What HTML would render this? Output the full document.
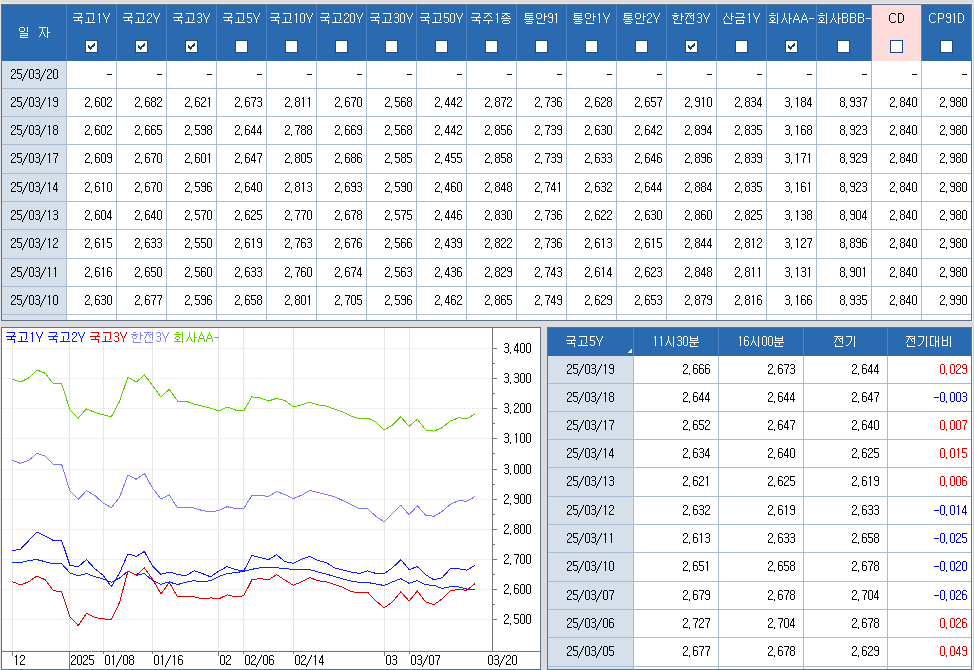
<!DOCTYPE html>
<html><head><meta charset="utf-8"><style>
html,body{margin:0;padding:0;width:974px;height:670px;overflow:hidden;background:#dcdcdf}
body>div,body>svg{position:absolute}
body{font-family:"Liberation Sans",sans-serif}
.t{font-family:"Liberation Sans",sans-serif;line-height:30px;white-space:nowrap}
</style></head><body>
<div style="left:0px;top:0px;width:974px;height:670px;background:#dcdcdf;"></div>
<div style="left:0px;top:3px;width:974px;height:1px;background:#ebebec;"></div>
<div style="left:0px;top:0px;width:1px;height:670px;background:#e6e6e8;"></div>
<div style="left:1px;top:4px;width:971px;height:317px;background:#5d7086;"></div>
<div style="left:2px;top:5px;width:969px;height:315px;background:#ffffff;"></div>
<div style="left:2px;top:5px;width:969px;height:56px;background:#2a6ab0;"></div>
<div style="left:872px;top:5px;width:49px;height:56px;background:#ffdcdc;"></div>
<div style="left:2px;top:61px;width:64px;height:259px;background:#d5e0eb;"></div>
<div style="left:66px;top:5px;width:1px;height:56px;background:#4f84c1;"></div>
<div style="left:66px;top:61px;width:1px;height:259px;background:#a9bccf;"></div>
<div style="left:116px;top:5px;width:1px;height:56px;background:#4f84c1;"></div>
<div style="left:116px;top:61px;width:1px;height:259px;background:#a9bccf;"></div>
<div style="left:166px;top:5px;width:1px;height:56px;background:#4f84c1;"></div>
<div style="left:166px;top:61px;width:1px;height:259px;background:#a9bccf;"></div>
<div style="left:216px;top:5px;width:1px;height:56px;background:#4f84c1;"></div>
<div style="left:216px;top:61px;width:1px;height:259px;background:#a9bccf;"></div>
<div style="left:266px;top:5px;width:1px;height:56px;background:#4f84c1;"></div>
<div style="left:266px;top:61px;width:1px;height:259px;background:#a9bccf;"></div>
<div style="left:316px;top:5px;width:1px;height:56px;background:#4f84c1;"></div>
<div style="left:316px;top:61px;width:1px;height:259px;background:#a9bccf;"></div>
<div style="left:366px;top:5px;width:1px;height:56px;background:#4f84c1;"></div>
<div style="left:366px;top:61px;width:1px;height:259px;background:#a9bccf;"></div>
<div style="left:416px;top:5px;width:1px;height:56px;background:#4f84c1;"></div>
<div style="left:416px;top:61px;width:1px;height:259px;background:#a9bccf;"></div>
<div style="left:466px;top:5px;width:1px;height:56px;background:#4f84c1;"></div>
<div style="left:466px;top:61px;width:1px;height:259px;background:#a9bccf;"></div>
<div style="left:516px;top:5px;width:1px;height:56px;background:#4f84c1;"></div>
<div style="left:516px;top:61px;width:1px;height:259px;background:#a9bccf;"></div>
<div style="left:566px;top:5px;width:1px;height:56px;background:#4f84c1;"></div>
<div style="left:566px;top:61px;width:1px;height:259px;background:#a9bccf;"></div>
<div style="left:616px;top:5px;width:1px;height:56px;background:#4f84c1;"></div>
<div style="left:616px;top:61px;width:1px;height:259px;background:#a9bccf;"></div>
<div style="left:666px;top:5px;width:1px;height:56px;background:#4f84c1;"></div>
<div style="left:666px;top:61px;width:1px;height:259px;background:#a9bccf;"></div>
<div style="left:716px;top:5px;width:1px;height:56px;background:#4f84c1;"></div>
<div style="left:716px;top:61px;width:1px;height:259px;background:#a9bccf;"></div>
<div style="left:766px;top:5px;width:1px;height:56px;background:#4f84c1;"></div>
<div style="left:766px;top:61px;width:1px;height:259px;background:#a9bccf;"></div>
<div style="left:816px;top:5px;width:1px;height:56px;background:#4f84c1;"></div>
<div style="left:816px;top:61px;width:1px;height:259px;background:#a9bccf;"></div>
<div style="left:871px;top:5px;width:1px;height:56px;background:#4f84c1;"></div>
<div style="left:871px;top:61px;width:1px;height:259px;background:#a9bccf;"></div>
<div style="left:921px;top:5px;width:1px;height:56px;background:#4f84c1;"></div>
<div style="left:921px;top:61px;width:1px;height:259px;background:#a9bccf;"></div>
<div style="left:2px;top:88px;width:969px;height:1px;background:#a9bccf;"></div>
<div style="left:2px;top:116px;width:969px;height:1px;background:#a9bccf;"></div>
<div style="left:2px;top:144px;width:969px;height:1px;background:#a9bccf;"></div>
<div style="left:2px;top:173px;width:969px;height:1px;background:#a9bccf;"></div>
<div style="left:2px;top:201px;width:969px;height:1px;background:#a9bccf;"></div>
<div style="left:2px;top:229px;width:969px;height:1px;background:#a9bccf;"></div>
<div style="left:2px;top:258px;width:969px;height:1px;background:#a9bccf;"></div>
<div style="left:2px;top:286px;width:969px;height:1px;background:#a9bccf;"></div>
<div style="left:2px;top:314px;width:969px;height:1px;background:#a9bccf;"></div>
<div style="left:85px;top:40px;width:11px;height:11px;border:1px solid #1a4a7e;background:#fff"></div>
<svg style="position:absolute;left:88px;top:43px" width="7" height="7" shape-rendering="crispEdges"><path d="M6 0h1v1h-1zM5 1h2v1h-2zM0 2h1v1h-1zM4 2h3v1h-3zM0 3h2v1h-2zM3 3h3v1h-3zM0 4h4v1h-4zM1 5h3v1h-3zM2 6h1v1h-1z" fill="#0f4072"/></svg>
<div style="left:135px;top:40px;width:11px;height:11px;border:1px solid #1a4a7e;background:#fff"></div>
<svg style="position:absolute;left:138px;top:43px" width="7" height="7" shape-rendering="crispEdges"><path d="M6 0h1v1h-1zM5 1h2v1h-2zM0 2h1v1h-1zM4 2h3v1h-3zM0 3h2v1h-2zM3 3h3v1h-3zM0 4h4v1h-4zM1 5h3v1h-3zM2 6h1v1h-1z" fill="#0f4072"/></svg>
<div style="left:185px;top:40px;width:11px;height:11px;border:1px solid #1a4a7e;background:#fff"></div>
<svg style="position:absolute;left:188px;top:43px" width="7" height="7" shape-rendering="crispEdges"><path d="M6 0h1v1h-1zM5 1h2v1h-2zM0 2h1v1h-1zM4 2h3v1h-3zM0 3h2v1h-2zM3 3h3v1h-3zM0 4h4v1h-4zM1 5h3v1h-3zM2 6h1v1h-1z" fill="#0f4072"/></svg>
<div style="left:235px;top:40px;width:11px;height:11px;border:1px solid #1a4a7e;background:#fff"></div>
<div style="left:285px;top:40px;width:11px;height:11px;border:1px solid #1a4a7e;background:#fff"></div>
<div style="left:335px;top:40px;width:11px;height:11px;border:1px solid #1a4a7e;background:#fff"></div>
<div style="left:385px;top:40px;width:11px;height:11px;border:1px solid #1a4a7e;background:#fff"></div>
<div style="left:435px;top:40px;width:11px;height:11px;border:1px solid #1a4a7e;background:#fff"></div>
<div style="left:485px;top:40px;width:11px;height:11px;border:1px solid #1a4a7e;background:#fff"></div>
<div style="left:535px;top:40px;width:11px;height:11px;border:1px solid #1a4a7e;background:#fff"></div>
<div style="left:585px;top:40px;width:11px;height:11px;border:1px solid #1a4a7e;background:#fff"></div>
<div style="left:635px;top:40px;width:11px;height:11px;border:1px solid #1a4a7e;background:#fff"></div>
<div style="left:685px;top:40px;width:11px;height:11px;border:1px solid #1a4a7e;background:#fff"></div>
<svg style="position:absolute;left:688px;top:43px" width="7" height="7" shape-rendering="crispEdges"><path d="M6 0h1v1h-1zM5 1h2v1h-2zM0 2h1v1h-1zM4 2h3v1h-3zM0 3h2v1h-2zM3 3h3v1h-3zM0 4h4v1h-4zM1 5h3v1h-3zM2 6h1v1h-1z" fill="#0f4072"/></svg>
<div style="left:735px;top:40px;width:11px;height:11px;border:1px solid #1a4a7e;background:#fff"></div>
<div style="left:785px;top:40px;width:11px;height:11px;border:1px solid #1a4a7e;background:#fff"></div>
<svg style="position:absolute;left:788px;top:43px" width="7" height="7" shape-rendering="crispEdges"><path d="M6 0h1v1h-1zM5 1h2v1h-2zM0 2h1v1h-1zM4 2h3v1h-3zM0 3h2v1h-2zM3 3h3v1h-3zM0 4h4v1h-4zM1 5h3v1h-3zM2 6h1v1h-1z" fill="#0f4072"/></svg>
<div style="left:837px;top:40px;width:11px;height:11px;border:1px solid #1a4a7e;background:#fff"></div>
<div style="left:890px;top:40px;width:11px;height:11px;border:1px solid #1a4a7e;background:#fff"></div>
<div style="left:940px;top:40px;width:11px;height:11px;border:1px solid #1a4a7e;background:#fff"></div>
<div style="left:972px;top:5px;width:1px;height:316px;background:#ffffff;"></div>
<div style="left:973px;top:5px;width:1px;height:316px;background:#c9d3de;"></div>
<div style="left:1px;top:327px;width:540px;height:343px;background:#5d7086;"></div>
<div style="left:2px;top:328px;width:538px;height:341px;background:#ffffff;"></div>
<svg style="position:absolute;left:0;top:0" width="974" height="670" viewBox="0 0 974 670"><rect x="12" y="328" width="1" height="323" fill="#e6e6e6"/><rect x="69" y="328" width="1" height="323" fill="#e6e6e6"/><rect x="103" y="328" width="1" height="323" fill="#e6e6e6"/><rect x="152" y="328" width="1" height="323" fill="#e6e6e6"/><rect x="218" y="328" width="1" height="323" fill="#e6e6e6"/><rect x="243" y="328" width="1" height="323" fill="#e6e6e6"/><rect x="293" y="328" width="1" height="323" fill="#e6e6e6"/><rect x="384" y="328" width="1" height="323" fill="#e6e6e6"/><rect x="409" y="328" width="1" height="323" fill="#e6e6e6"/><line x1="2" y1="619.5" x2="493" y2="619.5" stroke="#e2e2e2" stroke-width="1" stroke-dasharray="1 1"/><line x1="2" y1="589.5" x2="493" y2="589.5" stroke="#e2e2e2" stroke-width="1" stroke-dasharray="1 1"/><line x1="2" y1="559.5" x2="493" y2="559.5" stroke="#e2e2e2" stroke-width="1" stroke-dasharray="1 1"/><line x1="2" y1="529.5" x2="493" y2="529.5" stroke="#e2e2e2" stroke-width="1" stroke-dasharray="1 1"/><line x1="2" y1="499.5" x2="493" y2="499.5" stroke="#e2e2e2" stroke-width="1" stroke-dasharray="1 1"/><line x1="2" y1="469.5" x2="493" y2="469.5" stroke="#e2e2e2" stroke-width="1" stroke-dasharray="1 1"/><line x1="2" y1="438.5" x2="493" y2="438.5" stroke="#e2e2e2" stroke-width="1" stroke-dasharray="1 1"/><line x1="2" y1="408.5" x2="493" y2="408.5" stroke="#e2e2e2" stroke-width="1" stroke-dasharray="1 1"/><line x1="2" y1="378.5" x2="493" y2="378.5" stroke="#e2e2e2" stroke-width="1" stroke-dasharray="1 1"/><line x1="2" y1="348.5" x2="493" y2="348.5" stroke="#e2e2e2" stroke-width="1" stroke-dasharray="1 1"/><rect x="492" y="328" width="1" height="324" fill="#777"/><rect x="493" y="619" width="4" height="1" fill="#777"/><rect x="493" y="589" width="4" height="1" fill="#777"/><rect x="493" y="559" width="4" height="1" fill="#777"/><rect x="493" y="529" width="4" height="1" fill="#777"/><rect x="493" y="499" width="4" height="1" fill="#777"/><rect x="493" y="469" width="4" height="1" fill="#777"/><rect x="493" y="438" width="4" height="1" fill="#777"/><rect x="493" y="408" width="4" height="1" fill="#777"/><rect x="493" y="378" width="4" height="1" fill="#777"/><rect x="493" y="348" width="4" height="1" fill="#777"/><rect x="493" y="604" width="2" height="1" fill="#777"/><rect x="493" y="574" width="2" height="1" fill="#777"/><rect x="493" y="544" width="2" height="1" fill="#777"/><rect x="493" y="514" width="2" height="1" fill="#777"/><rect x="493" y="484" width="2" height="1" fill="#777"/><rect x="493" y="453" width="2" height="1" fill="#777"/><rect x="493" y="423" width="2" height="1" fill="#777"/><rect x="493" y="393" width="2" height="1" fill="#777"/><rect x="493" y="363" width="2" height="1" fill="#777"/><rect x="2" y="651" width="538" height="1" fill="#777"/><rect x="12" y="652" width="1" height="4" fill="#777"/><rect x="218" y="652" width="1" height="4" fill="#777"/><rect x="384" y="652" width="1" height="4" fill="#777"/><rect x="103" y="652" width="1" height="2" fill="#777"/><rect x="152" y="652" width="1" height="2" fill="#777"/><rect x="243" y="652" width="1" height="2" fill="#777"/><rect x="293" y="652" width="1" height="2" fill="#777"/><rect x="409" y="652" width="1" height="2" fill="#777"/><line x1="2" y1="650.5" x2="492" y2="650.5" stroke="#e8e8e8" stroke-width="1" stroke-dasharray="1 1"/><rect x="69" y="652" width="1" height="17" fill="#777"/><rect x="493" y="651" width="4" height="1" fill="#777"/><polyline points="12.1,562.6 20.4,562.6 28.6,560.5 36.9,559.6 45.2,561.7 53.4,563.8 61.7,563.8 70.0,572.9 78.3,575.9 86.5,573.5 94.8,576.8 103.1,578.9 111.3,582.2 119.6,578.0 127.9,571.1 136.2,575.3 144.4,573.5 152.7,580.7 161.0,584.3 169.2,581.9 177.5,584.6 185.8,582.2 194.0,580.7 202.3,581.9 210.6,580.7 218.8,576.5 227.1,573.5 235.4,572.6 243.7,571.4 251.9,569.3 260.2,567.8 268.5,567.8 276.7,567.8 285.0,568.7 293.3,569.3 301.6,569.6 309.8,569.6 318.1,572.0 326.4,574.1 334.6,576.5 342.9,578.9 351.2,581.0 359.4,582.5 367.7,582.5 376.0,584.0 384.2,585.5 392.5,581.9 400.8,578.6 409.1,583.4 417.3,580.7 425.6,584.9 433.9,585.2 442.1,588.5 450.4,586.7 458.7,587.0 466.9,589.1 475.2,589.1" fill="none" stroke="#0a28f0" stroke-width="1" shape-rendering="crispEdges"/><polyline points="12.1,550.6 20.4,549.4 28.6,540.7 36.9,531.9 45.2,536.2 53.4,540.4 61.7,540.7 70.0,565.4 78.3,566.6 86.5,559.6 94.8,568.7 103.1,575.3 111.3,586.7 119.6,572.9 127.9,553.9 136.2,556.3 144.4,551.5 152.7,566.3 161.0,574.4 169.2,572.0 177.5,574.4 185.8,575.9 194.0,570.8 202.3,573.5 210.6,576.8 218.8,571.1 227.1,566.6 235.4,569.6 243.7,571.1 251.9,555.4 260.2,557.5 268.5,559.6 276.7,554.8 285.0,561.7 293.3,563.2 301.6,559.3 309.8,556.3 318.1,560.5 326.4,562.6 334.6,567.8 342.9,569.9 351.2,572.0 359.4,573.5 367.7,570.8 376.0,573.5 384.2,573.5 392.5,567.8 400.8,559.6 409.1,569.6 417.3,566.6 425.6,574.7 433.9,579.8 442.1,577.7 450.4,568.7 458.7,568.7 466.9,570.2 475.2,565.1" fill="none" stroke="#1414ff" stroke-width="1" shape-rendering="crispEdges"/><polyline points="12.1,581.6 20.4,584.9 28.6,581.9 36.9,575.9 45.2,579.8 53.4,590.6 61.7,591.8 70.0,617.1 78.3,625.6 86.5,613.2 94.8,617.4 103.1,618.9 111.3,619.5 119.6,602.4 127.9,571.1 136.2,575.3 144.4,567.8 152.7,579.5 161.0,594.0 169.2,582.5 177.5,596.7 185.8,596.7 194.0,596.7 202.3,598.8 210.6,597.9 218.8,598.8 227.1,594.9 235.4,596.7 243.7,595.8 251.9,579.8 260.2,578.6 268.5,579.8 276.7,574.7 285.0,580.1 293.3,585.2 301.6,581.9 309.8,577.7 318.1,580.7 326.4,581.9 334.6,584.6 342.9,587.3 351.2,591.8 359.4,592.4 367.7,592.4 376.0,600.9 384.2,607.8 392.5,601.8 400.8,591.8 409.1,600.9 417.3,590.9 425.6,601.8 433.9,604.8 442.1,598.8 450.4,590.9 458.7,589.4 466.9,590.3 475.2,583.4" fill="none" stroke="#e00000" stroke-width="1" shape-rendering="crispEdges"/><polyline points="12.1,460.3 20.4,463.3 28.6,460.6 36.9,453.4 45.2,456.1 53.4,464.2 61.7,464.5 70.0,491.3 78.3,499.4 86.5,490.7 94.8,495.5 103.1,503.0 111.3,507.6 119.6,497.3 127.9,475.0 136.2,479.3 144.4,473.5 152.7,488.3 161.0,499.1 169.2,494.9 177.5,507.9 185.8,507.9 194.0,507.9 202.3,510.6 210.6,511.8 218.8,510.6 227.1,506.7 235.4,508.5 243.7,508.5 251.9,495.5 260.2,495.5 268.5,496.4 276.7,491.6 285.0,494.6 293.3,498.5 301.6,495.2 309.8,490.4 318.1,492.5 326.4,494.6 334.6,496.7 342.9,500.6 351.2,504.5 359.4,508.5 367.7,508.5 376.0,516.6 384.2,521.7 392.5,513.6 400.8,505.4 409.1,514.8 417.3,505.7 425.6,515.1 433.9,516.3 442.1,511.5 450.4,504.2 458.7,500.6 466.9,501.2 475.2,496.4" fill="none" stroke="#7b7bff" stroke-width="1" shape-rendering="crispEdges"/><polyline points="12.1,379.0 20.4,382.0 28.6,378.1 36.9,370.0 45.2,373.3 53.4,383.8 61.7,383.8 70.0,410.0 78.3,418.1 86.5,408.8 94.8,412.4 103.1,414.8 111.3,416.9 119.6,401.3 127.9,377.2 136.2,382.0 144.4,375.1 152.7,385.6 161.0,397.1 169.2,389.2 177.5,401.0 185.8,401.0 194.0,404.0 202.3,406.1 210.6,408.2 218.8,410.9 227.1,407.0 235.4,410.0 243.7,410.9 251.9,396.8 260.2,398.0 268.5,401.0 276.7,398.3 285.0,400.7 293.3,407.0 301.6,404.9 309.8,402.2 318.1,404.9 326.4,406.1 334.6,409.4 342.9,411.8 351.2,416.0 359.4,419.0 367.7,418.1 376.0,422.1 384.2,429.9 392.5,425.1 400.8,416.9 409.1,426.3 417.3,419.3 425.6,429.9 433.9,431.1 442.1,427.8 450.4,420.9 458.7,417.8 466.9,418.7 475.2,413.9" fill="none" stroke="#5fcc00" stroke-width="1" shape-rendering="crispEdges"/></svg>
<div style="left:547px;top:327px;width:425px;height:343px;background:#5d7086;"></div>
<div style="left:548px;top:328px;width:423px;height:341px;background:#ffffff;"></div>
<div style="left:548px;top:328px;width:423px;height:28px;background:#2a6ab0;"></div>
<div style="left:548px;top:356px;width:85px;height:313px;background:#d5e0eb;"></div>
<div style="left:633px;top:328px;width:1px;height:28px;background:#4f84c1;"></div>
<div style="left:633px;top:356px;width:1px;height:313px;background:#a9bccf;"></div>
<div style="left:718px;top:328px;width:1px;height:28px;background:#4f84c1;"></div>
<div style="left:718px;top:356px;width:1px;height:313px;background:#a9bccf;"></div>
<div style="left:803px;top:328px;width:1px;height:28px;background:#4f84c1;"></div>
<div style="left:803px;top:356px;width:1px;height:313px;background:#a9bccf;"></div>
<div style="left:887px;top:328px;width:1px;height:28px;background:#4f84c1;"></div>
<div style="left:887px;top:356px;width:1px;height:313px;background:#a9bccf;"></div>
<div style="left:548px;top:383px;width:423px;height:1px;background:#a9bccf;"></div>
<div style="left:548px;top:411px;width:423px;height:1px;background:#a9bccf;"></div>
<div style="left:548px;top:439px;width:423px;height:1px;background:#a9bccf;"></div>
<div style="left:548px;top:467px;width:423px;height:1px;background:#a9bccf;"></div>
<div style="left:548px;top:496px;width:423px;height:1px;background:#a9bccf;"></div>
<div style="left:548px;top:524px;width:423px;height:1px;background:#a9bccf;"></div>
<div style="left:548px;top:552px;width:423px;height:1px;background:#a9bccf;"></div>
<div style="left:548px;top:581px;width:423px;height:1px;background:#a9bccf;"></div>
<div style="left:548px;top:609px;width:423px;height:1px;background:#a9bccf;"></div>
<div style="left:548px;top:637px;width:423px;height:1px;background:#a9bccf;"></div>
<div style="left:548px;top:666px;width:423px;height:1px;background:#a9bccf;"></div>
<svg style="position:absolute;left:628px;top:349px" width="4" height="4" shape-rendering="crispEdges"><path d="M3 0h1v4h-4v-1h1v-1h1v-1h1z" fill="#fff"/></svg>
<div style="left:972px;top:328px;width:1px;height:341px;background:#ffffff;"></div>
<div style="left:973px;top:328px;width:1px;height:341px;background:#c9d3de;"></div>
<svg style="position:absolute;left:0;top:0" width="974" height="670" shape-rendering="crispEdges"><defs><path id="a" d="M1 0h3v1h-3zM0 1h1v1h-1zM4 1h1v1h-1zM0 2h1v1h-1zM4 2h1v1h-1zM0 3h1v1h-1zM4 3h1v1h-1zM0 4h1v1h-1zM4 4h1v1h-1zM0 5h1v1h-1zM4 5h1v1h-1zM0 6h1v1h-1zM4 6h1v1h-1zM0 7h1v1h-1zM4 7h1v1h-1zM0 8h1v1h-1zM4 8h1v1h-1zM1 9h3v1h-3z"/><path id="b" d="M2 0h1v1h-1zM1 1h2v1h-2zM2 2h1v1h-1zM2 3h1v1h-1zM2 4h1v1h-1zM2 5h1v1h-1zM2 6h1v1h-1zM2 7h1v1h-1zM2 8h1v1h-1zM2 9h1v1h-1z"/><path id="c" d="M1 0h3v1h-3zM0 1h1v1h-1zM4 1h1v1h-1zM0 2h1v1h-1zM4 2h1v1h-1zM4 3h1v1h-1zM3 4h1v1h-1zM2 5h1v1h-1zM1 6h1v1h-1zM0 7h1v1h-1zM0 8h1v1h-1zM0 9h5v1h-5z"/><path id="d" d="M1 0h3v1h-3zM0 1h1v1h-1zM4 1h1v1h-1zM4 2h1v1h-1zM4 3h1v1h-1zM1 4h3v1h-3zM4 5h1v1h-1zM4 6h1v1h-1zM4 7h1v1h-1zM0 8h1v1h-1zM4 8h1v1h-1zM1 9h3v1h-3z"/><path id="e" d="M3 0h1v1h-1zM2 1h2v1h-2zM2 2h2v1h-2zM1 3h1v1h-1zM3 3h1v1h-1zM1 4h1v1h-1zM3 4h1v1h-1zM0 5h1v1h-1zM3 5h1v1h-1zM0 6h1v1h-1zM3 6h1v1h-1zM0 7h5v1h-5zM3 8h1v1h-1zM3 9h1v1h-1z"/><path id="f" d="M0 0h5v1h-5zM0 1h1v1h-1zM0 2h1v1h-1zM0 3h1v1h-1zM0 4h4v1h-4zM4 5h1v1h-1zM4 6h1v1h-1zM4 7h1v1h-1zM0 8h1v1h-1zM4 8h1v1h-1zM1 9h3v1h-3z"/><path id="g" d="M1 0h3v1h-3zM0 1h1v1h-1zM4 1h1v1h-1zM0 2h1v1h-1zM0 3h1v1h-1zM0 4h4v1h-4zM0 5h1v1h-1zM4 5h1v1h-1zM0 6h1v1h-1zM4 6h1v1h-1zM0 7h1v1h-1zM4 7h1v1h-1zM0 8h1v1h-1zM4 8h1v1h-1zM1 9h3v1h-3z"/><path id="h" d="M0 0h5v1h-5zM4 1h1v1h-1zM4 2h1v1h-1zM3 3h1v1h-1zM3 4h1v1h-1zM2 5h1v1h-1zM2 6h1v1h-1zM2 7h1v1h-1zM2 8h1v1h-1zM2 9h1v1h-1z"/><path id="i" d="M1 0h3v1h-3zM0 1h1v1h-1zM4 1h1v1h-1zM0 2h1v1h-1zM4 2h1v1h-1zM0 3h1v1h-1zM4 3h1v1h-1zM1 4h3v1h-3zM0 5h1v1h-1zM4 5h1v1h-1zM0 6h1v1h-1zM4 6h1v1h-1zM0 7h1v1h-1zM4 7h1v1h-1zM0 8h1v1h-1zM4 8h1v1h-1zM1 9h3v1h-3z"/><path id="j" d="M1 0h3v1h-3zM0 1h1v1h-1zM4 1h1v1h-1zM0 2h1v1h-1zM4 2h1v1h-1zM0 3h1v1h-1zM4 3h1v1h-1zM1 4h4v1h-4zM4 5h1v1h-1zM4 6h1v1h-1zM4 7h1v1h-1zM0 8h1v1h-1zM4 8h1v1h-1zM1 9h3v1h-3z"/><path id="k" d="M0 9h1v1h-1zM0 10h1v1h-1z"/><path id="l" d="M0 5h5v1h-5z"/><path id="m" d="M4 0h1v1h-1zM4 1h1v1h-1zM3 2h1v1h-1zM3 3h1v1h-1zM2 4h1v1h-1zM2 5h1v1h-1zM1 6h1v1h-1zM1 7h1v1h-1zM0 8h1v1h-1zM0 9h1v1h-1zM-1 10h1v1h-1zM-1 11h1v1h-1z"/><path id="h0" d="M1 0h8v1h-8zM8 1h1v1h-1zM8 2h1v1h-1zM7 3h1v1h-1zM0 4h10v1h-10zM5 5h1v1h-1zM5 6h1v1h-1zM1 7h8v1h-8zM8 8h1v1h-1zM8 9h1v1h-1zM8 10h1v1h-1z"/><path id="h1" d="M1 0h8v1h-8zM8 1h1v1h-1zM8 2h1v1h-1zM8 3h1v1h-1zM3 4h1v1h-1zM8 4h1v1h-1zM3 5h1v1h-1zM8 5h1v1h-1zM3 6h1v1h-1zM8 6h1v1h-1zM3 7h1v1h-1zM7 7h1v1h-1zM3 8h1v1h-1zM0 9h10v1h-10z"/><path id="h2" d="M1 0h8v1h-8zM5 1h1v1h-1zM4 2h1v1h-1zM6 2h1v1h-1zM3 3h1v1h-1zM7 3h1v1h-1zM1 4h2v1h-2zM8 4h1v1h-1zM0 7h10v1h-10zM5 8h1v1h-1zM5 9h1v1h-1zM5 10h1v1h-1z"/><path id="h3" d="M1 0h8v1h-8zM4 1h2v1h-2zM3 2h1v1h-1zM6 2h1v1h-1zM1 3h2v1h-2zM7 3h2v1h-2zM5 4h1v1h-1zM0 5h10v1h-10zM2 7h6v1h-6zM1 8h1v1h-1zM8 8h1v1h-1zM1 9h1v1h-1zM8 9h1v1h-1zM2 10h6v1h-6z"/><path id="h4" d="M1 0h8v1h-8zM1 1h1v1h-1zM1 2h8v1h-8zM1 3h1v1h-1zM1 4h8v1h-8zM5 5h1v1h-1zM0 6h10v1h-10zM2 8h6v1h-6zM1 9h1v1h-1zM8 9h1v1h-1zM2 10h6v1h-6z"/><path id="h5" d="M1 0h4v1h-4zM8 0h1v1h-1zM0 1h1v1h-1zM5 1h1v1h-1zM8 1h1v1h-1zM0 2h1v1h-1zM5 2h1v1h-1zM8 2h1v1h-1zM0 3h1v1h-1zM5 3h1v1h-1zM8 3h3v1h-3zM0 4h1v1h-1zM5 4h1v1h-1zM8 4h1v1h-1zM1 5h4v1h-4zM8 5h1v1h-1zM8 6h1v1h-1zM8 7h1v1h-1zM1 8h1v1h-1zM1 9h1v1h-1zM1 10h8v1h-8z"/><path id="h6" d="M1 0h3v1h-3zM8 0h1v1h-1zM8 1h1v1h-1zM-1 2h7v1h-7zM8 2h1v1h-1zM1 3h3v1h-3zM8 3h3v1h-3zM0 4h1v1h-1zM4 4h1v1h-1zM8 4h1v1h-1zM0 5h1v1h-1zM4 5h1v1h-1zM8 5h1v1h-1zM1 6h3v1h-3zM8 6h1v1h-1zM8 7h1v1h-1zM1 8h1v1h-1zM1 9h1v1h-1zM1 10h8v1h-8z"/><path id="h7" d="M0 0h7v1h-7zM8 0h1v1h-1zM3 1h1v1h-1zM8 1h1v1h-1zM2 2h1v1h-1zM4 2h1v1h-1zM6 2h3v1h-3zM2 3h1v1h-1zM5 3h1v1h-1zM8 3h1v1h-1zM1 4h1v1h-1zM5 4h1v1h-1zM8 4h1v1h-1zM1 5h1v1h-1zM6 5h1v1h-1zM8 5h1v1h-1zM0 6h1v1h-1zM8 6h1v1h-1zM8 7h1v1h-1zM1 8h1v1h-1zM1 9h1v1h-1zM1 10h8v1h-8z"/><path id="h8" d="M3 0h1v1h-1zM8 0h1v1h-1zM3 1h1v1h-1zM8 1h1v1h-1zM3 2h1v1h-1zM8 2h1v1h-1zM2 3h1v1h-1zM4 3h1v1h-1zM8 3h3v1h-3zM1 4h1v1h-1zM5 4h1v1h-1zM8 4h1v1h-1zM1 5h1v1h-1zM6 5h1v1h-1zM8 5h1v1h-1zM0 6h1v1h-1zM8 6h1v1h-1zM8 7h1v1h-1zM1 8h1v1h-1zM1 9h1v1h-1zM1 10h8v1h-8z"/><path id="h9" d="M1 0h8v1h-8zM8 1h1v1h-1zM8 2h1v1h-1zM7 3h1v1h-1zM0 4h10v1h-10zM1 7h8v1h-8zM1 8h1v1h-1zM8 8h1v1h-1zM1 9h1v1h-1zM8 9h1v1h-1zM1 10h8v1h-8z"/><path id="h10" d="M2 0h3v1h-3zM8 0h1v1h-1zM8 1h1v1h-1zM0 2h7v1h-7zM8 2h1v1h-1zM8 3h1v1h-1zM2 4h3v1h-3zM8 4h1v1h-1zM1 5h1v1h-1zM5 5h1v1h-1zM8 5h1v1h-1zM1 6h1v1h-1zM5 6h1v1h-1zM8 6h1v1h-1zM2 7h3v1h-3zM8 7h1v1h-1zM3 8h1v1h-1zM8 8h1v1h-1zM0 9h7v1h-7zM8 9h1v1h-1zM8 10h1v1h-1z"/><path id="h11" d="M3 0h1v1h-1zM8 0h1v1h-1zM3 1h1v1h-1zM8 1h1v1h-1zM3 2h1v1h-1zM8 2h1v1h-1zM3 3h1v1h-1zM8 3h1v1h-1zM3 4h1v1h-1zM8 4h1v1h-1zM2 5h1v1h-1zM4 5h1v1h-1zM8 5h3v1h-3zM2 6h1v1h-1zM4 6h1v1h-1zM8 6h1v1h-1zM1 7h1v1h-1zM5 7h1v1h-1zM8 7h1v1h-1zM1 8h1v1h-1zM5 8h1v1h-1zM8 8h1v1h-1zM0 9h1v1h-1zM6 9h1v1h-1zM8 9h1v1h-1zM8 10h1v1h-1z"/><path id="h12" d="M3 0h1v1h-1zM8 0h1v1h-1zM3 1h1v1h-1zM8 1h1v1h-1zM3 2h1v1h-1zM8 2h1v1h-1zM3 3h1v1h-1zM8 3h1v1h-1zM3 4h1v1h-1zM8 4h1v1h-1zM2 5h1v1h-1zM4 5h1v1h-1zM8 5h1v1h-1zM2 6h1v1h-1zM4 6h1v1h-1zM8 6h1v1h-1zM1 7h1v1h-1zM5 7h1v1h-1zM8 7h1v1h-1zM1 8h1v1h-1zM5 8h1v1h-1zM8 8h1v1h-1zM0 9h1v1h-1zM6 9h1v1h-1zM8 9h1v1h-1zM8 10h1v1h-1z"/><path id="h13" d="M0 0h7v1h-7zM8 0h1v1h-1zM3 1h1v1h-1zM8 1h1v1h-1zM3 2h1v1h-1zM8 2h1v1h-1zM3 3h1v1h-1zM8 3h1v1h-1zM3 4h1v1h-1zM8 4h1v1h-1zM2 5h1v1h-1zM4 5h1v1h-1zM8 5h3v1h-3zM2 6h1v1h-1zM4 6h1v1h-1zM8 6h1v1h-1zM1 7h1v1h-1zM5 7h1v1h-1zM8 7h1v1h-1zM1 8h1v1h-1zM5 8h1v1h-1zM8 8h1v1h-1zM0 9h1v1h-1zM6 9h1v1h-1zM8 9h1v1h-1zM8 10h1v1h-1z"/><path id="h14" d="M1 0h4v1h-4zM8 0h1v1h-1zM0 1h1v1h-1zM5 1h1v1h-1zM8 1h1v1h-1zM0 2h1v1h-1zM5 2h1v1h-1zM8 2h1v1h-1zM0 3h1v1h-1zM5 3h1v1h-1zM8 3h1v1h-1zM1 4h4v1h-4zM8 4h1v1h-1zM1 6h8v1h-8zM8 7h1v1h-1zM1 8h8v1h-8zM1 9h1v1h-1zM1 10h8v1h-8z"/><path id="h15" d="M1 0h1v1h-1zM8 0h1v1h-1zM1 1h1v1h-1zM8 1h1v1h-1zM1 2h8v1h-8zM1 3h1v1h-1zM8 3h1v1h-1zM1 4h8v1h-8zM0 6h10v1h-10zM5 7h1v1h-1zM1 8h1v1h-1zM5 8h1v1h-1zM1 9h1v1h-1zM1 10h8v1h-8z"/><path id="h16" d="M0 0h6v1h-6zM8 0h1v1h-1zM5 1h1v1h-1zM8 1h1v1h-1zM5 2h1v1h-1zM8 2h1v1h-1zM5 3h1v1h-1zM8 3h1v1h-1zM5 4h1v1h-1zM8 4h1v1h-1zM4 5h1v1h-1zM8 5h1v1h-1zM4 6h1v1h-1zM8 6h1v1h-1zM3 7h1v1h-1zM8 7h1v1h-1zM2 8h1v1h-1zM8 8h1v1h-1zM0 9h2v1h-2zM8 9h1v1h-1zM8 10h1v1h-1z"/><path id="h17" d="M0 0h4v1h-4zM5 0h1v1h-1zM8 0h1v1h-1zM0 1h1v1h-1zM5 1h1v1h-1zM8 1h1v1h-1zM0 2h1v1h-1zM5 2h1v1h-1zM8 2h1v1h-1zM0 3h1v1h-1zM5 3h1v1h-1zM8 3h1v1h-1zM0 4h1v1h-1zM5 4h1v1h-1zM8 4h1v1h-1zM0 5h1v1h-1zM5 5h4v1h-4zM0 6h1v1h-1zM5 6h1v1h-1zM8 6h1v1h-1zM0 7h1v1h-1zM5 7h1v1h-1zM8 7h1v1h-1zM0 8h1v1h-1zM5 8h1v1h-1zM8 8h1v1h-1zM0 9h4v1h-4zM5 9h1v1h-1zM8 9h1v1h-1zM5 10h1v1h-1zM8 10h1v1h-1z"/><path id="h18" d="M0 0h1v1h-1zM5 0h1v1h-1zM8 0h1v1h-1zM0 1h1v1h-1zM5 1h1v1h-1zM8 1h1v1h-1zM0 2h1v1h-1zM5 2h1v1h-1zM8 2h1v1h-1zM0 3h1v1h-1zM5 3h1v1h-1zM8 3h1v1h-1zM0 4h6v1h-6zM8 4h1v1h-1zM0 5h1v1h-1zM5 5h1v1h-1zM8 5h1v1h-1zM0 6h1v1h-1zM5 6h1v1h-1zM8 6h1v1h-1zM0 7h1v1h-1zM5 7h1v1h-1zM8 7h1v1h-1zM0 8h1v1h-1zM5 8h1v1h-1zM8 8h1v1h-1zM0 9h6v1h-6zM8 9h1v1h-1zM8 10h1v1h-1z"/><path id="h19" d="M0 0h1v1h-1zM6 0h1v1h-1zM0 1h1v1h-1zM6 1h1v1h-1zM1 2h1v1h-1zM5 2h1v1h-1zM1 3h1v1h-1zM5 3h1v1h-1zM2 4h1v1h-1zM4 4h1v1h-1zM2 5h1v1h-1zM4 5h1v1h-1zM3 6h1v1h-1zM3 7h1v1h-1zM3 8h1v1h-1zM3 9h1v1h-1z"/><path id="h20" d="M3 0h1v1h-1zM3 1h1v1h-1zM2 2h1v1h-1zM4 2h1v1h-1zM2 3h1v1h-1zM4 3h1v1h-1zM1 4h1v1h-1zM5 4h1v1h-1zM1 5h1v1h-1zM5 5h1v1h-1zM1 6h5v1h-5zM0 7h1v1h-1zM6 7h1v1h-1zM0 8h1v1h-1zM6 8h1v1h-1zM0 9h1v1h-1zM6 9h1v1h-1z"/><path id="h21" d="M0 0h5v1h-5zM0 1h1v1h-1zM5 1h1v1h-1zM0 2h1v1h-1zM5 2h1v1h-1zM0 3h1v1h-1zM5 3h1v1h-1zM0 4h5v1h-5zM0 5h1v1h-1zM5 5h1v1h-1zM0 6h1v1h-1zM5 6h1v1h-1zM0 7h1v1h-1zM5 7h1v1h-1zM0 8h1v1h-1zM5 8h1v1h-1zM0 9h5v1h-5z"/><path id="h22" d="M2 0h4v1h-4zM1 1h1v1h-1zM6 1h1v1h-1zM0 2h1v1h-1zM0 3h1v1h-1zM0 4h1v1h-1zM0 5h1v1h-1zM0 6h1v1h-1zM0 7h1v1h-1zM1 8h1v1h-1zM6 8h1v1h-1zM2 9h4v1h-4z"/><path id="h23" d="M0 0h4v1h-4zM0 1h1v1h-1zM4 1h1v1h-1zM0 2h1v1h-1zM5 2h1v1h-1zM0 3h1v1h-1zM5 3h1v1h-1zM0 4h1v1h-1zM5 4h1v1h-1zM0 5h1v1h-1zM5 5h1v1h-1zM0 6h1v1h-1zM5 6h1v1h-1zM0 7h1v1h-1zM5 7h1v1h-1zM0 8h1v1h-1zM4 8h1v1h-1zM0 9h4v1h-4z"/><path id="h24" d="M0 0h5v1h-5zM0 1h1v1h-1zM5 1h1v1h-1zM0 2h1v1h-1zM5 2h1v1h-1zM0 3h1v1h-1zM5 3h1v1h-1zM0 4h1v1h-1zM5 4h1v1h-1zM0 5h5v1h-5zM0 6h1v1h-1zM0 7h1v1h-1zM0 8h1v1h-1zM0 9h1v1h-1z"/></defs><g fill="#fff"><use href="#h14" x="19" y="27"/></g><g fill="#fff"><use href="#h13" x="39" y="27"/></g><g fill="#fff"><use href="#h0" x="73" y="13"/><use href="#h1" x="85" y="13"/><use href="#b" x="97" y="13"/><use href="#h19" x="103" y="13"/></g><g fill="#fff"><use href="#h0" x="123" y="13"/><use href="#h1" x="135" y="13"/><use href="#c" x="147" y="13"/><use href="#h19" x="153" y="13"/></g><g fill="#fff"><use href="#h0" x="173" y="13"/><use href="#h1" x="185" y="13"/><use href="#d" x="197" y="13"/><use href="#h19" x="203" y="13"/></g><g fill="#fff"><use href="#h0" x="223" y="13"/><use href="#h1" x="235" y="13"/><use href="#f" x="247" y="13"/><use href="#h19" x="253" y="13"/></g><g fill="#fff"><use href="#h0" x="270" y="13"/><use href="#h1" x="282" y="13"/><use href="#b" x="294" y="13"/><use href="#a" x="300" y="13"/><use href="#h19" x="306" y="13"/></g><g fill="#fff"><use href="#h0" x="320" y="13"/><use href="#h1" x="332" y="13"/><use href="#c" x="344" y="13"/><use href="#a" x="350" y="13"/><use href="#h19" x="356" y="13"/></g><g fill="#fff"><use href="#h0" x="370" y="13"/><use href="#h1" x="382" y="13"/><use href="#d" x="394" y="13"/><use href="#a" x="400" y="13"/><use href="#h19" x="406" y="13"/></g><g fill="#fff"><use href="#h0" x="420" y="13"/><use href="#h1" x="432" y="13"/><use href="#f" x="444" y="13"/><use href="#a" x="450" y="13"/><use href="#h19" x="456" y="13"/></g><g fill="#fff"><use href="#h0" x="471" y="13"/><use href="#h2" x="483" y="13"/><use href="#b" x="495" y="13"/><use href="#h3" x="501" y="13"/></g><g fill="#fff"><use href="#h4" x="524" y="13"/><use href="#h5" x="536" y="13"/><use href="#j" x="548" y="13"/><use href="#b" x="554" y="13"/></g><g fill="#fff"><use href="#h4" x="573" y="13"/><use href="#h5" x="585" y="13"/><use href="#b" x="597" y="13"/><use href="#h19" x="603" y="13"/></g><g fill="#fff"><use href="#h4" x="623" y="13"/><use href="#h5" x="635" y="13"/><use href="#c" x="647" y="13"/><use href="#h19" x="653" y="13"/></g><g fill="#fff"><use href="#h6" x="673" y="13"/><use href="#h7" x="685" y="13"/><use href="#d" x="697" y="13"/><use href="#h19" x="703" y="13"/></g><g fill="#fff"><use href="#h8" x="723" y="13"/><use href="#h9" x="735" y="13"/><use href="#b" x="747" y="13"/><use href="#h19" x="753" y="13"/></g><g fill="#fff"><use href="#h10" x="769" y="13"/><use href="#h11" x="781" y="13"/><use href="#h20" x="793" y="13"/><use href="#h20" x="801" y="13"/><use href="#l" x="809" y="13"/></g><g fill="#fff"><use href="#h10" x="818" y="13"/><use href="#h11" x="830" y="13"/><use href="#h21" x="842" y="13"/><use href="#h21" x="850" y="13"/><use href="#h21" x="858" y="13"/><use href="#l" x="866" y="13"/></g><g fill="#000"><use href="#h22" x="889" y="13"/><use href="#h23" x="898" y="13"/></g><g fill="#fff"><use href="#h22" x="929" y="13"/><use href="#h24" x="938" y="13"/><use href="#j" x="946" y="13"/><use href="#b" x="952" y="13"/><use href="#h23" x="958" y="13"/></g><g fill="#000"><use href="#c" x="11" y="69"/><use href="#f" x="17" y="69"/><use href="#m" x="23" y="69"/><use href="#a" x="29" y="69"/><use href="#d" x="35" y="69"/><use href="#m" x="41" y="69"/><use href="#c" x="47" y="69"/><use href="#a" x="53" y="69"/></g><g fill="#000"><use href="#l" x="107" y="69"/></g><g fill="#000"><use href="#l" x="157" y="69"/></g><g fill="#000"><use href="#l" x="207" y="69"/></g><g fill="#000"><use href="#l" x="257" y="69"/></g><g fill="#000"><use href="#l" x="307" y="69"/></g><g fill="#000"><use href="#l" x="357" y="69"/></g><g fill="#000"><use href="#l" x="407" y="69"/></g><g fill="#000"><use href="#l" x="457" y="69"/></g><g fill="#000"><use href="#l" x="507" y="69"/></g><g fill="#000"><use href="#l" x="557" y="69"/></g><g fill="#000"><use href="#l" x="607" y="69"/></g><g fill="#000"><use href="#l" x="657" y="69"/></g><g fill="#000"><use href="#l" x="707" y="69"/></g><g fill="#000"><use href="#l" x="757" y="69"/></g><g fill="#000"><use href="#l" x="807" y="69"/></g><g fill="#000"><use href="#l" x="862" y="69"/></g><g fill="#000"><use href="#l" x="912" y="69"/></g><g fill="#000"><use href="#l" x="962" y="69"/></g><g fill="#000"><use href="#c" x="11" y="97"/><use href="#f" x="17" y="97"/><use href="#m" x="23" y="97"/><use href="#a" x="29" y="97"/><use href="#d" x="35" y="97"/><use href="#m" x="41" y="97"/><use href="#b" x="47" y="97"/><use href="#j" x="53" y="97"/></g><g fill="#000"><use href="#c" x="85" y="97"/><use href="#k" x="91" y="97"/><use href="#g" x="95" y="97"/><use href="#a" x="101" y="97"/><use href="#c" x="107" y="97"/></g><g fill="#000"><use href="#c" x="135" y="97"/><use href="#k" x="141" y="97"/><use href="#g" x="145" y="97"/><use href="#i" x="151" y="97"/><use href="#c" x="157" y="97"/></g><g fill="#000"><use href="#c" x="185" y="97"/><use href="#k" x="191" y="97"/><use href="#g" x="195" y="97"/><use href="#c" x="201" y="97"/><use href="#b" x="207" y="97"/></g><g fill="#000"><use href="#c" x="235" y="97"/><use href="#k" x="241" y="97"/><use href="#g" x="245" y="97"/><use href="#h" x="251" y="97"/><use href="#d" x="257" y="97"/></g><g fill="#000"><use href="#c" x="285" y="97"/><use href="#k" x="291" y="97"/><use href="#i" x="295" y="97"/><use href="#b" x="301" y="97"/><use href="#b" x="307" y="97"/></g><g fill="#000"><use href="#c" x="335" y="97"/><use href="#k" x="341" y="97"/><use href="#g" x="345" y="97"/><use href="#h" x="351" y="97"/><use href="#a" x="357" y="97"/></g><g fill="#000"><use href="#c" x="385" y="97"/><use href="#k" x="391" y="97"/><use href="#f" x="395" y="97"/><use href="#g" x="401" y="97"/><use href="#i" x="407" y="97"/></g><g fill="#000"><use href="#c" x="435" y="97"/><use href="#k" x="441" y="97"/><use href="#e" x="445" y="97"/><use href="#e" x="451" y="97"/><use href="#c" x="457" y="97"/></g><g fill="#000"><use href="#c" x="485" y="97"/><use href="#k" x="491" y="97"/><use href="#i" x="495" y="97"/><use href="#h" x="501" y="97"/><use href="#c" x="507" y="97"/></g><g fill="#000"><use href="#c" x="535" y="97"/><use href="#k" x="541" y="97"/><use href="#h" x="545" y="97"/><use href="#d" x="551" y="97"/><use href="#g" x="557" y="97"/></g><g fill="#000"><use href="#c" x="585" y="97"/><use href="#k" x="591" y="97"/><use href="#g" x="595" y="97"/><use href="#c" x="601" y="97"/><use href="#i" x="607" y="97"/></g><g fill="#000"><use href="#c" x="635" y="97"/><use href="#k" x="641" y="97"/><use href="#g" x="645" y="97"/><use href="#f" x="651" y="97"/><use href="#h" x="657" y="97"/></g><g fill="#000"><use href="#c" x="685" y="97"/><use href="#k" x="691" y="97"/><use href="#j" x="695" y="97"/><use href="#b" x="701" y="97"/><use href="#a" x="707" y="97"/></g><g fill="#000"><use href="#c" x="735" y="97"/><use href="#k" x="741" y="97"/><use href="#i" x="745" y="97"/><use href="#d" x="751" y="97"/><use href="#e" x="757" y="97"/></g><g fill="#000"><use href="#d" x="785" y="97"/><use href="#k" x="791" y="97"/><use href="#b" x="795" y="97"/><use href="#i" x="801" y="97"/><use href="#e" x="807" y="97"/></g><g fill="#000"><use href="#i" x="840" y="97"/><use href="#k" x="846" y="97"/><use href="#j" x="850" y="97"/><use href="#d" x="856" y="97"/><use href="#h" x="862" y="97"/></g><g fill="#000"><use href="#c" x="890" y="97"/><use href="#k" x="896" y="97"/><use href="#i" x="900" y="97"/><use href="#e" x="906" y="97"/><use href="#a" x="912" y="97"/></g><g fill="#000"><use href="#c" x="940" y="97"/><use href="#k" x="946" y="97"/><use href="#j" x="950" y="97"/><use href="#i" x="956" y="97"/><use href="#a" x="962" y="97"/></g><g fill="#000"><use href="#c" x="11" y="125"/><use href="#f" x="17" y="125"/><use href="#m" x="23" y="125"/><use href="#a" x="29" y="125"/><use href="#d" x="35" y="125"/><use href="#m" x="41" y="125"/><use href="#b" x="47" y="125"/><use href="#i" x="53" y="125"/></g><g fill="#000"><use href="#c" x="85" y="125"/><use href="#k" x="91" y="125"/><use href="#g" x="95" y="125"/><use href="#a" x="101" y="125"/><use href="#c" x="107" y="125"/></g><g fill="#000"><use href="#c" x="135" y="125"/><use href="#k" x="141" y="125"/><use href="#g" x="145" y="125"/><use href="#g" x="151" y="125"/><use href="#f" x="157" y="125"/></g><g fill="#000"><use href="#c" x="185" y="125"/><use href="#k" x="191" y="125"/><use href="#f" x="195" y="125"/><use href="#j" x="201" y="125"/><use href="#i" x="207" y="125"/></g><g fill="#000"><use href="#c" x="235" y="125"/><use href="#k" x="241" y="125"/><use href="#g" x="245" y="125"/><use href="#e" x="251" y="125"/><use href="#e" x="257" y="125"/></g><g fill="#000"><use href="#c" x="285" y="125"/><use href="#k" x="291" y="125"/><use href="#h" x="295" y="125"/><use href="#i" x="301" y="125"/><use href="#i" x="307" y="125"/></g><g fill="#000"><use href="#c" x="335" y="125"/><use href="#k" x="341" y="125"/><use href="#g" x="345" y="125"/><use href="#g" x="351" y="125"/><use href="#j" x="357" y="125"/></g><g fill="#000"><use href="#c" x="385" y="125"/><use href="#k" x="391" y="125"/><use href="#f" x="395" y="125"/><use href="#g" x="401" y="125"/><use href="#i" x="407" y="125"/></g><g fill="#000"><use href="#c" x="435" y="125"/><use href="#k" x="441" y="125"/><use href="#e" x="445" y="125"/><use href="#e" x="451" y="125"/><use href="#c" x="457" y="125"/></g><g fill="#000"><use href="#c" x="485" y="125"/><use href="#k" x="491" y="125"/><use href="#i" x="495" y="125"/><use href="#f" x="501" y="125"/><use href="#g" x="507" y="125"/></g><g fill="#000"><use href="#c" x="535" y="125"/><use href="#k" x="541" y="125"/><use href="#h" x="545" y="125"/><use href="#d" x="551" y="125"/><use href="#j" x="557" y="125"/></g><g fill="#000"><use href="#c" x="585" y="125"/><use href="#k" x="591" y="125"/><use href="#g" x="595" y="125"/><use href="#d" x="601" y="125"/><use href="#a" x="607" y="125"/></g><g fill="#000"><use href="#c" x="635" y="125"/><use href="#k" x="641" y="125"/><use href="#g" x="645" y="125"/><use href="#e" x="651" y="125"/><use href="#c" x="657" y="125"/></g><g fill="#000"><use href="#c" x="685" y="125"/><use href="#k" x="691" y="125"/><use href="#i" x="695" y="125"/><use href="#j" x="701" y="125"/><use href="#e" x="707" y="125"/></g><g fill="#000"><use href="#c" x="735" y="125"/><use href="#k" x="741" y="125"/><use href="#i" x="745" y="125"/><use href="#d" x="751" y="125"/><use href="#f" x="757" y="125"/></g><g fill="#000"><use href="#d" x="785" y="125"/><use href="#k" x="791" y="125"/><use href="#b" x="795" y="125"/><use href="#g" x="801" y="125"/><use href="#i" x="807" y="125"/></g><g fill="#000"><use href="#i" x="840" y="125"/><use href="#k" x="846" y="125"/><use href="#j" x="850" y="125"/><use href="#c" x="856" y="125"/><use href="#d" x="862" y="125"/></g><g fill="#000"><use href="#c" x="890" y="125"/><use href="#k" x="896" y="125"/><use href="#i" x="900" y="125"/><use href="#e" x="906" y="125"/><use href="#a" x="912" y="125"/></g><g fill="#000"><use href="#c" x="940" y="125"/><use href="#k" x="946" y="125"/><use href="#j" x="950" y="125"/><use href="#i" x="956" y="125"/><use href="#a" x="962" y="125"/></g><g fill="#000"><use href="#c" x="11" y="153"/><use href="#f" x="17" y="153"/><use href="#m" x="23" y="153"/><use href="#a" x="29" y="153"/><use href="#d" x="35" y="153"/><use href="#m" x="41" y="153"/><use href="#b" x="47" y="153"/><use href="#h" x="53" y="153"/></g><g fill="#000"><use href="#c" x="85" y="153"/><use href="#k" x="91" y="153"/><use href="#g" x="95" y="153"/><use href="#a" x="101" y="153"/><use href="#j" x="107" y="153"/></g><g fill="#000"><use href="#c" x="135" y="153"/><use href="#k" x="141" y="153"/><use href="#g" x="145" y="153"/><use href="#h" x="151" y="153"/><use href="#a" x="157" y="153"/></g><g fill="#000"><use href="#c" x="185" y="153"/><use href="#k" x="191" y="153"/><use href="#g" x="195" y="153"/><use href="#a" x="201" y="153"/><use href="#b" x="207" y="153"/></g><g fill="#000"><use href="#c" x="235" y="153"/><use href="#k" x="241" y="153"/><use href="#g" x="245" y="153"/><use href="#e" x="251" y="153"/><use href="#h" x="257" y="153"/></g><g fill="#000"><use href="#c" x="285" y="153"/><use href="#k" x="291" y="153"/><use href="#i" x="295" y="153"/><use href="#a" x="301" y="153"/><use href="#f" x="307" y="153"/></g><g fill="#000"><use href="#c" x="335" y="153"/><use href="#k" x="341" y="153"/><use href="#g" x="345" y="153"/><use href="#i" x="351" y="153"/><use href="#g" x="357" y="153"/></g><g fill="#000"><use href="#c" x="385" y="153"/><use href="#k" x="391" y="153"/><use href="#f" x="395" y="153"/><use href="#i" x="401" y="153"/><use href="#f" x="407" y="153"/></g><g fill="#000"><use href="#c" x="435" y="153"/><use href="#k" x="441" y="153"/><use href="#e" x="445" y="153"/><use href="#f" x="451" y="153"/><use href="#f" x="457" y="153"/></g><g fill="#000"><use href="#c" x="485" y="153"/><use href="#k" x="491" y="153"/><use href="#i" x="495" y="153"/><use href="#f" x="501" y="153"/><use href="#i" x="507" y="153"/></g><g fill="#000"><use href="#c" x="535" y="153"/><use href="#k" x="541" y="153"/><use href="#h" x="545" y="153"/><use href="#d" x="551" y="153"/><use href="#j" x="557" y="153"/></g><g fill="#000"><use href="#c" x="585" y="153"/><use href="#k" x="591" y="153"/><use href="#g" x="595" y="153"/><use href="#d" x="601" y="153"/><use href="#d" x="607" y="153"/></g><g fill="#000"><use href="#c" x="635" y="153"/><use href="#k" x="641" y="153"/><use href="#g" x="645" y="153"/><use href="#e" x="651" y="153"/><use href="#g" x="657" y="153"/></g><g fill="#000"><use href="#c" x="685" y="153"/><use href="#k" x="691" y="153"/><use href="#i" x="695" y="153"/><use href="#j" x="701" y="153"/><use href="#g" x="707" y="153"/></g><g fill="#000"><use href="#c" x="735" y="153"/><use href="#k" x="741" y="153"/><use href="#i" x="745" y="153"/><use href="#d" x="751" y="153"/><use href="#j" x="757" y="153"/></g><g fill="#000"><use href="#d" x="785" y="153"/><use href="#k" x="791" y="153"/><use href="#b" x="795" y="153"/><use href="#h" x="801" y="153"/><use href="#b" x="807" y="153"/></g><g fill="#000"><use href="#i" x="840" y="153"/><use href="#k" x="846" y="153"/><use href="#j" x="850" y="153"/><use href="#c" x="856" y="153"/><use href="#j" x="862" y="153"/></g><g fill="#000"><use href="#c" x="890" y="153"/><use href="#k" x="896" y="153"/><use href="#i" x="900" y="153"/><use href="#e" x="906" y="153"/><use href="#a" x="912" y="153"/></g><g fill="#000"><use href="#c" x="940" y="153"/><use href="#k" x="946" y="153"/><use href="#j" x="950" y="153"/><use href="#i" x="956" y="153"/><use href="#a" x="962" y="153"/></g><g fill="#000"><use href="#c" x="11" y="182"/><use href="#f" x="17" y="182"/><use href="#m" x="23" y="182"/><use href="#a" x="29" y="182"/><use href="#d" x="35" y="182"/><use href="#m" x="41" y="182"/><use href="#b" x="47" y="182"/><use href="#e" x="53" y="182"/></g><g fill="#000"><use href="#c" x="85" y="182"/><use href="#k" x="91" y="182"/><use href="#g" x="95" y="182"/><use href="#b" x="101" y="182"/><use href="#a" x="107" y="182"/></g><g fill="#000"><use href="#c" x="135" y="182"/><use href="#k" x="141" y="182"/><use href="#g" x="145" y="182"/><use href="#h" x="151" y="182"/><use href="#a" x="157" y="182"/></g><g fill="#000"><use href="#c" x="185" y="182"/><use href="#k" x="191" y="182"/><use href="#f" x="195" y="182"/><use href="#j" x="201" y="182"/><use href="#g" x="207" y="182"/></g><g fill="#000"><use href="#c" x="235" y="182"/><use href="#k" x="241" y="182"/><use href="#g" x="245" y="182"/><use href="#e" x="251" y="182"/><use href="#a" x="257" y="182"/></g><g fill="#000"><use href="#c" x="285" y="182"/><use href="#k" x="291" y="182"/><use href="#i" x="295" y="182"/><use href="#b" x="301" y="182"/><use href="#d" x="307" y="182"/></g><g fill="#000"><use href="#c" x="335" y="182"/><use href="#k" x="341" y="182"/><use href="#g" x="345" y="182"/><use href="#j" x="351" y="182"/><use href="#d" x="357" y="182"/></g><g fill="#000"><use href="#c" x="385" y="182"/><use href="#k" x="391" y="182"/><use href="#f" x="395" y="182"/><use href="#j" x="401" y="182"/><use href="#a" x="407" y="182"/></g><g fill="#000"><use href="#c" x="435" y="182"/><use href="#k" x="441" y="182"/><use href="#e" x="445" y="182"/><use href="#g" x="451" y="182"/><use href="#a" x="457" y="182"/></g><g fill="#000"><use href="#c" x="485" y="182"/><use href="#k" x="491" y="182"/><use href="#i" x="495" y="182"/><use href="#e" x="501" y="182"/><use href="#i" x="507" y="182"/></g><g fill="#000"><use href="#c" x="535" y="182"/><use href="#k" x="541" y="182"/><use href="#h" x="545" y="182"/><use href="#e" x="551" y="182"/><use href="#b" x="557" y="182"/></g><g fill="#000"><use href="#c" x="585" y="182"/><use href="#k" x="591" y="182"/><use href="#g" x="595" y="182"/><use href="#d" x="601" y="182"/><use href="#c" x="607" y="182"/></g><g fill="#000"><use href="#c" x="635" y="182"/><use href="#k" x="641" y="182"/><use href="#g" x="645" y="182"/><use href="#e" x="651" y="182"/><use href="#e" x="657" y="182"/></g><g fill="#000"><use href="#c" x="685" y="182"/><use href="#k" x="691" y="182"/><use href="#i" x="695" y="182"/><use href="#i" x="701" y="182"/><use href="#e" x="707" y="182"/></g><g fill="#000"><use href="#c" x="735" y="182"/><use href="#k" x="741" y="182"/><use href="#i" x="745" y="182"/><use href="#d" x="751" y="182"/><use href="#f" x="757" y="182"/></g><g fill="#000"><use href="#d" x="785" y="182"/><use href="#k" x="791" y="182"/><use href="#b" x="795" y="182"/><use href="#g" x="801" y="182"/><use href="#b" x="807" y="182"/></g><g fill="#000"><use href="#i" x="840" y="182"/><use href="#k" x="846" y="182"/><use href="#j" x="850" y="182"/><use href="#c" x="856" y="182"/><use href="#d" x="862" y="182"/></g><g fill="#000"><use href="#c" x="890" y="182"/><use href="#k" x="896" y="182"/><use href="#i" x="900" y="182"/><use href="#e" x="906" y="182"/><use href="#a" x="912" y="182"/></g><g fill="#000"><use href="#c" x="940" y="182"/><use href="#k" x="946" y="182"/><use href="#j" x="950" y="182"/><use href="#i" x="956" y="182"/><use href="#a" x="962" y="182"/></g><g fill="#000"><use href="#c" x="11" y="210"/><use href="#f" x="17" y="210"/><use href="#m" x="23" y="210"/><use href="#a" x="29" y="210"/><use href="#d" x="35" y="210"/><use href="#m" x="41" y="210"/><use href="#b" x="47" y="210"/><use href="#d" x="53" y="210"/></g><g fill="#000"><use href="#c" x="85" y="210"/><use href="#k" x="91" y="210"/><use href="#g" x="95" y="210"/><use href="#a" x="101" y="210"/><use href="#e" x="107" y="210"/></g><g fill="#000"><use href="#c" x="135" y="210"/><use href="#k" x="141" y="210"/><use href="#g" x="145" y="210"/><use href="#e" x="151" y="210"/><use href="#a" x="157" y="210"/></g><g fill="#000"><use href="#c" x="185" y="210"/><use href="#k" x="191" y="210"/><use href="#f" x="195" y="210"/><use href="#h" x="201" y="210"/><use href="#a" x="207" y="210"/></g><g fill="#000"><use href="#c" x="235" y="210"/><use href="#k" x="241" y="210"/><use href="#g" x="245" y="210"/><use href="#c" x="251" y="210"/><use href="#f" x="257" y="210"/></g><g fill="#000"><use href="#c" x="285" y="210"/><use href="#k" x="291" y="210"/><use href="#h" x="295" y="210"/><use href="#h" x="301" y="210"/><use href="#a" x="307" y="210"/></g><g fill="#000"><use href="#c" x="335" y="210"/><use href="#k" x="341" y="210"/><use href="#g" x="345" y="210"/><use href="#h" x="351" y="210"/><use href="#i" x="357" y="210"/></g><g fill="#000"><use href="#c" x="385" y="210"/><use href="#k" x="391" y="210"/><use href="#f" x="395" y="210"/><use href="#h" x="401" y="210"/><use href="#f" x="407" y="210"/></g><g fill="#000"><use href="#c" x="435" y="210"/><use href="#k" x="441" y="210"/><use href="#e" x="445" y="210"/><use href="#e" x="451" y="210"/><use href="#g" x="457" y="210"/></g><g fill="#000"><use href="#c" x="485" y="210"/><use href="#k" x="491" y="210"/><use href="#i" x="495" y="210"/><use href="#d" x="501" y="210"/><use href="#a" x="507" y="210"/></g><g fill="#000"><use href="#c" x="535" y="210"/><use href="#k" x="541" y="210"/><use href="#h" x="545" y="210"/><use href="#d" x="551" y="210"/><use href="#g" x="557" y="210"/></g><g fill="#000"><use href="#c" x="585" y="210"/><use href="#k" x="591" y="210"/><use href="#g" x="595" y="210"/><use href="#c" x="601" y="210"/><use href="#c" x="607" y="210"/></g><g fill="#000"><use href="#c" x="635" y="210"/><use href="#k" x="641" y="210"/><use href="#g" x="645" y="210"/><use href="#d" x="651" y="210"/><use href="#a" x="657" y="210"/></g><g fill="#000"><use href="#c" x="685" y="210"/><use href="#k" x="691" y="210"/><use href="#i" x="695" y="210"/><use href="#g" x="701" y="210"/><use href="#a" x="707" y="210"/></g><g fill="#000"><use href="#c" x="735" y="210"/><use href="#k" x="741" y="210"/><use href="#i" x="745" y="210"/><use href="#c" x="751" y="210"/><use href="#f" x="757" y="210"/></g><g fill="#000"><use href="#d" x="785" y="210"/><use href="#k" x="791" y="210"/><use href="#b" x="795" y="210"/><use href="#d" x="801" y="210"/><use href="#i" x="807" y="210"/></g><g fill="#000"><use href="#i" x="840" y="210"/><use href="#k" x="846" y="210"/><use href="#j" x="850" y="210"/><use href="#a" x="856" y="210"/><use href="#e" x="862" y="210"/></g><g fill="#000"><use href="#c" x="890" y="210"/><use href="#k" x="896" y="210"/><use href="#i" x="900" y="210"/><use href="#e" x="906" y="210"/><use href="#a" x="912" y="210"/></g><g fill="#000"><use href="#c" x="940" y="210"/><use href="#k" x="946" y="210"/><use href="#j" x="950" y="210"/><use href="#i" x="956" y="210"/><use href="#a" x="962" y="210"/></g><g fill="#000"><use href="#c" x="11" y="238"/><use href="#f" x="17" y="238"/><use href="#m" x="23" y="238"/><use href="#a" x="29" y="238"/><use href="#d" x="35" y="238"/><use href="#m" x="41" y="238"/><use href="#b" x="47" y="238"/><use href="#c" x="53" y="238"/></g><g fill="#000"><use href="#c" x="85" y="238"/><use href="#k" x="91" y="238"/><use href="#g" x="95" y="238"/><use href="#b" x="101" y="238"/><use href="#f" x="107" y="238"/></g><g fill="#000"><use href="#c" x="135" y="238"/><use href="#k" x="141" y="238"/><use href="#g" x="145" y="238"/><use href="#d" x="151" y="238"/><use href="#d" x="157" y="238"/></g><g fill="#000"><use href="#c" x="185" y="238"/><use href="#k" x="191" y="238"/><use href="#f" x="195" y="238"/><use href="#f" x="201" y="238"/><use href="#a" x="207" y="238"/></g><g fill="#000"><use href="#c" x="235" y="238"/><use href="#k" x="241" y="238"/><use href="#g" x="245" y="238"/><use href="#b" x="251" y="238"/><use href="#j" x="257" y="238"/></g><g fill="#000"><use href="#c" x="285" y="238"/><use href="#k" x="291" y="238"/><use href="#h" x="295" y="238"/><use href="#g" x="301" y="238"/><use href="#d" x="307" y="238"/></g><g fill="#000"><use href="#c" x="335" y="238"/><use href="#k" x="341" y="238"/><use href="#g" x="345" y="238"/><use href="#h" x="351" y="238"/><use href="#g" x="357" y="238"/></g><g fill="#000"><use href="#c" x="385" y="238"/><use href="#k" x="391" y="238"/><use href="#f" x="395" y="238"/><use href="#g" x="401" y="238"/><use href="#g" x="407" y="238"/></g><g fill="#000"><use href="#c" x="435" y="238"/><use href="#k" x="441" y="238"/><use href="#e" x="445" y="238"/><use href="#d" x="451" y="238"/><use href="#j" x="457" y="238"/></g><g fill="#000"><use href="#c" x="485" y="238"/><use href="#k" x="491" y="238"/><use href="#i" x="495" y="238"/><use href="#c" x="501" y="238"/><use href="#c" x="507" y="238"/></g><g fill="#000"><use href="#c" x="535" y="238"/><use href="#k" x="541" y="238"/><use href="#h" x="545" y="238"/><use href="#d" x="551" y="238"/><use href="#g" x="557" y="238"/></g><g fill="#000"><use href="#c" x="585" y="238"/><use href="#k" x="591" y="238"/><use href="#g" x="595" y="238"/><use href="#b" x="601" y="238"/><use href="#d" x="607" y="238"/></g><g fill="#000"><use href="#c" x="635" y="238"/><use href="#k" x="641" y="238"/><use href="#g" x="645" y="238"/><use href="#b" x="651" y="238"/><use href="#f" x="657" y="238"/></g><g fill="#000"><use href="#c" x="685" y="238"/><use href="#k" x="691" y="238"/><use href="#i" x="695" y="238"/><use href="#e" x="701" y="238"/><use href="#e" x="707" y="238"/></g><g fill="#000"><use href="#c" x="735" y="238"/><use href="#k" x="741" y="238"/><use href="#i" x="745" y="238"/><use href="#b" x="751" y="238"/><use href="#c" x="757" y="238"/></g><g fill="#000"><use href="#d" x="785" y="238"/><use href="#k" x="791" y="238"/><use href="#b" x="795" y="238"/><use href="#c" x="801" y="238"/><use href="#h" x="807" y="238"/></g><g fill="#000"><use href="#i" x="840" y="238"/><use href="#k" x="846" y="238"/><use href="#i" x="850" y="238"/><use href="#j" x="856" y="238"/><use href="#g" x="862" y="238"/></g><g fill="#000"><use href="#c" x="890" y="238"/><use href="#k" x="896" y="238"/><use href="#i" x="900" y="238"/><use href="#e" x="906" y="238"/><use href="#a" x="912" y="238"/></g><g fill="#000"><use href="#c" x="940" y="238"/><use href="#k" x="946" y="238"/><use href="#j" x="950" y="238"/><use href="#i" x="956" y="238"/><use href="#a" x="962" y="238"/></g><g fill="#000"><use href="#c" x="11" y="267"/><use href="#f" x="17" y="267"/><use href="#m" x="23" y="267"/><use href="#a" x="29" y="267"/><use href="#d" x="35" y="267"/><use href="#m" x="41" y="267"/><use href="#b" x="47" y="267"/><use href="#b" x="53" y="267"/></g><g fill="#000"><use href="#c" x="85" y="267"/><use href="#k" x="91" y="267"/><use href="#g" x="95" y="267"/><use href="#b" x="101" y="267"/><use href="#g" x="107" y="267"/></g><g fill="#000"><use href="#c" x="135" y="267"/><use href="#k" x="141" y="267"/><use href="#g" x="145" y="267"/><use href="#f" x="151" y="267"/><use href="#a" x="157" y="267"/></g><g fill="#000"><use href="#c" x="185" y="267"/><use href="#k" x="191" y="267"/><use href="#f" x="195" y="267"/><use href="#g" x="201" y="267"/><use href="#a" x="207" y="267"/></g><g fill="#000"><use href="#c" x="235" y="267"/><use href="#k" x="241" y="267"/><use href="#g" x="245" y="267"/><use href="#d" x="251" y="267"/><use href="#d" x="257" y="267"/></g><g fill="#000"><use href="#c" x="285" y="267"/><use href="#k" x="291" y="267"/><use href="#h" x="295" y="267"/><use href="#g" x="301" y="267"/><use href="#a" x="307" y="267"/></g><g fill="#000"><use href="#c" x="335" y="267"/><use href="#k" x="341" y="267"/><use href="#g" x="345" y="267"/><use href="#h" x="351" y="267"/><use href="#e" x="357" y="267"/></g><g fill="#000"><use href="#c" x="385" y="267"/><use href="#k" x="391" y="267"/><use href="#f" x="395" y="267"/><use href="#g" x="401" y="267"/><use href="#d" x="407" y="267"/></g><g fill="#000"><use href="#c" x="435" y="267"/><use href="#k" x="441" y="267"/><use href="#e" x="445" y="267"/><use href="#d" x="451" y="267"/><use href="#g" x="457" y="267"/></g><g fill="#000"><use href="#c" x="485" y="267"/><use href="#k" x="491" y="267"/><use href="#i" x="495" y="267"/><use href="#c" x="501" y="267"/><use href="#j" x="507" y="267"/></g><g fill="#000"><use href="#c" x="535" y="267"/><use href="#k" x="541" y="267"/><use href="#h" x="545" y="267"/><use href="#e" x="551" y="267"/><use href="#d" x="557" y="267"/></g><g fill="#000"><use href="#c" x="585" y="267"/><use href="#k" x="591" y="267"/><use href="#g" x="595" y="267"/><use href="#b" x="601" y="267"/><use href="#e" x="607" y="267"/></g><g fill="#000"><use href="#c" x="635" y="267"/><use href="#k" x="641" y="267"/><use href="#g" x="645" y="267"/><use href="#c" x="651" y="267"/><use href="#d" x="657" y="267"/></g><g fill="#000"><use href="#c" x="685" y="267"/><use href="#k" x="691" y="267"/><use href="#i" x="695" y="267"/><use href="#e" x="701" y="267"/><use href="#i" x="707" y="267"/></g><g fill="#000"><use href="#c" x="735" y="267"/><use href="#k" x="741" y="267"/><use href="#i" x="745" y="267"/><use href="#b" x="751" y="267"/><use href="#b" x="757" y="267"/></g><g fill="#000"><use href="#d" x="785" y="267"/><use href="#k" x="791" y="267"/><use href="#b" x="795" y="267"/><use href="#d" x="801" y="267"/><use href="#b" x="807" y="267"/></g><g fill="#000"><use href="#i" x="840" y="267"/><use href="#k" x="846" y="267"/><use href="#j" x="850" y="267"/><use href="#a" x="856" y="267"/><use href="#b" x="862" y="267"/></g><g fill="#000"><use href="#c" x="890" y="267"/><use href="#k" x="896" y="267"/><use href="#i" x="900" y="267"/><use href="#e" x="906" y="267"/><use href="#a" x="912" y="267"/></g><g fill="#000"><use href="#c" x="940" y="267"/><use href="#k" x="946" y="267"/><use href="#j" x="950" y="267"/><use href="#i" x="956" y="267"/><use href="#a" x="962" y="267"/></g><g fill="#000"><use href="#c" x="11" y="295"/><use href="#f" x="17" y="295"/><use href="#m" x="23" y="295"/><use href="#a" x="29" y="295"/><use href="#d" x="35" y="295"/><use href="#m" x="41" y="295"/><use href="#b" x="47" y="295"/><use href="#a" x="53" y="295"/></g><g fill="#000"><use href="#c" x="85" y="295"/><use href="#k" x="91" y="295"/><use href="#g" x="95" y="295"/><use href="#d" x="101" y="295"/><use href="#a" x="107" y="295"/></g><g fill="#000"><use href="#c" x="135" y="295"/><use href="#k" x="141" y="295"/><use href="#g" x="145" y="295"/><use href="#h" x="151" y="295"/><use href="#h" x="157" y="295"/></g><g fill="#000"><use href="#c" x="185" y="295"/><use href="#k" x="191" y="295"/><use href="#f" x="195" y="295"/><use href="#j" x="201" y="295"/><use href="#g" x="207" y="295"/></g><g fill="#000"><use href="#c" x="235" y="295"/><use href="#k" x="241" y="295"/><use href="#g" x="245" y="295"/><use href="#f" x="251" y="295"/><use href="#i" x="257" y="295"/></g><g fill="#000"><use href="#c" x="285" y="295"/><use href="#k" x="291" y="295"/><use href="#i" x="295" y="295"/><use href="#a" x="301" y="295"/><use href="#b" x="307" y="295"/></g><g fill="#000"><use href="#c" x="335" y="295"/><use href="#k" x="341" y="295"/><use href="#h" x="345" y="295"/><use href="#a" x="351" y="295"/><use href="#f" x="357" y="295"/></g><g fill="#000"><use href="#c" x="385" y="295"/><use href="#k" x="391" y="295"/><use href="#f" x="395" y="295"/><use href="#j" x="401" y="295"/><use href="#g" x="407" y="295"/></g><g fill="#000"><use href="#c" x="435" y="295"/><use href="#k" x="441" y="295"/><use href="#e" x="445" y="295"/><use href="#g" x="451" y="295"/><use href="#c" x="457" y="295"/></g><g fill="#000"><use href="#c" x="485" y="295"/><use href="#k" x="491" y="295"/><use href="#i" x="495" y="295"/><use href="#g" x="501" y="295"/><use href="#f" x="507" y="295"/></g><g fill="#000"><use href="#c" x="535" y="295"/><use href="#k" x="541" y="295"/><use href="#h" x="545" y="295"/><use href="#e" x="551" y="295"/><use href="#j" x="557" y="295"/></g><g fill="#000"><use href="#c" x="585" y="295"/><use href="#k" x="591" y="295"/><use href="#g" x="595" y="295"/><use href="#c" x="601" y="295"/><use href="#j" x="607" y="295"/></g><g fill="#000"><use href="#c" x="635" y="295"/><use href="#k" x="641" y="295"/><use href="#g" x="645" y="295"/><use href="#f" x="651" y="295"/><use href="#d" x="657" y="295"/></g><g fill="#000"><use href="#c" x="685" y="295"/><use href="#k" x="691" y="295"/><use href="#i" x="695" y="295"/><use href="#h" x="701" y="295"/><use href="#j" x="707" y="295"/></g><g fill="#000"><use href="#c" x="735" y="295"/><use href="#k" x="741" y="295"/><use href="#i" x="745" y="295"/><use href="#b" x="751" y="295"/><use href="#g" x="757" y="295"/></g><g fill="#000"><use href="#d" x="785" y="295"/><use href="#k" x="791" y="295"/><use href="#b" x="795" y="295"/><use href="#g" x="801" y="295"/><use href="#g" x="807" y="295"/></g><g fill="#000"><use href="#i" x="840" y="295"/><use href="#k" x="846" y="295"/><use href="#j" x="850" y="295"/><use href="#d" x="856" y="295"/><use href="#f" x="862" y="295"/></g><g fill="#000"><use href="#c" x="890" y="295"/><use href="#k" x="896" y="295"/><use href="#i" x="900" y="295"/><use href="#e" x="906" y="295"/><use href="#a" x="912" y="295"/></g><g fill="#000"><use href="#c" x="940" y="295"/><use href="#k" x="946" y="295"/><use href="#j" x="950" y="295"/><use href="#j" x="956" y="295"/><use href="#a" x="962" y="295"/></g><g fill="#0a0af0"><use href="#h0" x="6" y="332"/><use href="#h1" x="18" y="332"/><use href="#b" x="30" y="332"/><use href="#h19" x="36" y="332"/></g><g fill="#0a1eff"><use href="#h0" x="48" y="332"/><use href="#h1" x="60" y="332"/><use href="#c" x="72" y="332"/><use href="#h19" x="78" y="332"/></g><g fill="#e00000"><use href="#h0" x="90" y="332"/><use href="#h1" x="102" y="332"/><use href="#d" x="114" y="332"/><use href="#h19" x="120" y="332"/></g><g fill="#8080ff"><use href="#h6" x="132" y="332"/><use href="#h7" x="144" y="332"/><use href="#d" x="156" y="332"/><use href="#h19" x="162" y="332"/></g><g fill="#60cc00"><use href="#h10" x="174" y="332"/><use href="#h11" x="186" y="332"/><use href="#h20" x="198" y="332"/><use href="#h20" x="206" y="332"/><use href="#l" x="214" y="332"/></g><g fill="#000"><use href="#c" x="504" y="614"/><use href="#k" x="510" y="614"/><use href="#f" x="514" y="614"/><use href="#a" x="520" y="614"/><use href="#a" x="526" y="614"/></g><g fill="#000"><use href="#c" x="504" y="584"/><use href="#k" x="510" y="584"/><use href="#g" x="514" y="584"/><use href="#a" x="520" y="584"/><use href="#a" x="526" y="584"/></g><g fill="#000"><use href="#c" x="504" y="554"/><use href="#k" x="510" y="554"/><use href="#h" x="514" y="554"/><use href="#a" x="520" y="554"/><use href="#a" x="526" y="554"/></g><g fill="#000"><use href="#c" x="504" y="524"/><use href="#k" x="510" y="524"/><use href="#i" x="514" y="524"/><use href="#a" x="520" y="524"/><use href="#a" x="526" y="524"/></g><g fill="#000"><use href="#c" x="504" y="494"/><use href="#k" x="510" y="494"/><use href="#j" x="514" y="494"/><use href="#a" x="520" y="494"/><use href="#a" x="526" y="494"/></g><g fill="#000"><use href="#d" x="504" y="464"/><use href="#k" x="510" y="464"/><use href="#a" x="514" y="464"/><use href="#a" x="520" y="464"/><use href="#a" x="526" y="464"/></g><g fill="#000"><use href="#d" x="504" y="433"/><use href="#k" x="510" y="433"/><use href="#b" x="514" y="433"/><use href="#a" x="520" y="433"/><use href="#a" x="526" y="433"/></g><g fill="#000"><use href="#d" x="504" y="403"/><use href="#k" x="510" y="403"/><use href="#c" x="514" y="403"/><use href="#a" x="520" y="403"/><use href="#a" x="526" y="403"/></g><g fill="#000"><use href="#d" x="504" y="373"/><use href="#k" x="510" y="373"/><use href="#d" x="514" y="373"/><use href="#a" x="520" y="373"/><use href="#a" x="526" y="373"/></g><g fill="#000"><use href="#d" x="504" y="343"/><use href="#k" x="510" y="343"/><use href="#e" x="514" y="343"/><use href="#a" x="520" y="343"/><use href="#a" x="526" y="343"/></g><g fill="#000"><use href="#b" x="14" y="655"/><use href="#c" x="20" y="655"/></g><g fill="#000"><use href="#c" x="71" y="655"/><use href="#a" x="77" y="655"/><use href="#c" x="83" y="655"/><use href="#f" x="89" y="655"/></g><g fill="#000"><use href="#a" x="105" y="655"/><use href="#b" x="111" y="655"/><use href="#m" x="117" y="655"/><use href="#a" x="123" y="655"/><use href="#i" x="129" y="655"/></g><g fill="#000"><use href="#a" x="154" y="655"/><use href="#b" x="160" y="655"/><use href="#m" x="166" y="655"/><use href="#b" x="172" y="655"/><use href="#g" x="178" y="655"/></g><g fill="#000"><use href="#a" x="220" y="655"/><use href="#c" x="226" y="655"/></g><g fill="#000"><use href="#a" x="245" y="655"/><use href="#c" x="251" y="655"/><use href="#m" x="257" y="655"/><use href="#a" x="263" y="655"/><use href="#g" x="269" y="655"/></g><g fill="#000"><use href="#a" x="295" y="655"/><use href="#c" x="301" y="655"/><use href="#m" x="307" y="655"/><use href="#b" x="313" y="655"/><use href="#e" x="319" y="655"/></g><g fill="#000"><use href="#a" x="386" y="655"/><use href="#d" x="392" y="655"/></g><g fill="#000"><use href="#a" x="411" y="655"/><use href="#d" x="417" y="655"/><use href="#m" x="423" y="655"/><use href="#a" x="429" y="655"/><use href="#h" x="435" y="655"/></g><g fill="#000"><use href="#a" x="488" y="655"/><use href="#d" x="494" y="655"/><use href="#m" x="500" y="655"/><use href="#c" x="506" y="655"/><use href="#a" x="512" y="655"/></g><g fill="#fff"><use href="#h0" x="566" y="336"/><use href="#h1" x="578" y="336"/><use href="#f" x="590" y="336"/><use href="#h19" x="596" y="336"/></g><g fill="#fff"><use href="#b" x="653" y="336"/><use href="#b" x="659" y="336"/><use href="#h12" x="665" y="336"/><use href="#d" x="677" y="336"/><use href="#a" x="683" y="336"/><use href="#h15" x="689" y="336"/></g><g fill="#fff"><use href="#b" x="738" y="336"/><use href="#g" x="744" y="336"/><use href="#h12" x="750" y="336"/><use href="#a" x="762" y="336"/><use href="#a" x="768" y="336"/><use href="#h15" x="774" y="336"/></g><g fill="#fff"><use href="#h7" x="834" y="336"/><use href="#h16" x="846" y="336"/></g><g fill="#fff"><use href="#h7" x="906" y="336"/><use href="#h16" x="918" y="336"/><use href="#h17" x="930" y="336"/><use href="#h18" x="942" y="336"/></g><g fill="#000"><use href="#c" x="567" y="364"/><use href="#f" x="573" y="364"/><use href="#m" x="579" y="364"/><use href="#a" x="585" y="364"/><use href="#d" x="591" y="364"/><use href="#m" x="597" y="364"/><use href="#b" x="603" y="364"/><use href="#j" x="609" y="364"/></g><g fill="#000"><use href="#c" x="683" y="364"/><use href="#k" x="689" y="364"/><use href="#g" x="693" y="364"/><use href="#g" x="699" y="364"/><use href="#g" x="705" y="364"/></g><g fill="#000"><use href="#c" x="768" y="364"/><use href="#k" x="774" y="364"/><use href="#g" x="778" y="364"/><use href="#h" x="784" y="364"/><use href="#d" x="790" y="364"/></g><g fill="#000"><use href="#c" x="852" y="364"/><use href="#k" x="858" y="364"/><use href="#g" x="862" y="364"/><use href="#e" x="868" y="364"/><use href="#e" x="874" y="364"/></g><g fill="#dc0000"><use href="#a" x="940" y="364"/><use href="#k" x="946" y="364"/><use href="#a" x="950" y="364"/><use href="#c" x="956" y="364"/><use href="#j" x="962" y="364"/></g><g fill="#000"><use href="#c" x="567" y="392"/><use href="#f" x="573" y="392"/><use href="#m" x="579" y="392"/><use href="#a" x="585" y="392"/><use href="#d" x="591" y="392"/><use href="#m" x="597" y="392"/><use href="#b" x="603" y="392"/><use href="#i" x="609" y="392"/></g><g fill="#000"><use href="#c" x="683" y="392"/><use href="#k" x="689" y="392"/><use href="#g" x="693" y="392"/><use href="#e" x="699" y="392"/><use href="#e" x="705" y="392"/></g><g fill="#000"><use href="#c" x="768" y="392"/><use href="#k" x="774" y="392"/><use href="#g" x="778" y="392"/><use href="#e" x="784" y="392"/><use href="#e" x="790" y="392"/></g><g fill="#000"><use href="#c" x="852" y="392"/><use href="#k" x="858" y="392"/><use href="#g" x="862" y="392"/><use href="#e" x="868" y="392"/><use href="#h" x="874" y="392"/></g><g fill="#0000c8"><use href="#l" x="934" y="392"/><use href="#a" x="940" y="392"/><use href="#k" x="946" y="392"/><use href="#a" x="950" y="392"/><use href="#a" x="956" y="392"/><use href="#d" x="962" y="392"/></g><g fill="#000"><use href="#c" x="567" y="420"/><use href="#f" x="573" y="420"/><use href="#m" x="579" y="420"/><use href="#a" x="585" y="420"/><use href="#d" x="591" y="420"/><use href="#m" x="597" y="420"/><use href="#b" x="603" y="420"/><use href="#h" x="609" y="420"/></g><g fill="#000"><use href="#c" x="683" y="420"/><use href="#k" x="689" y="420"/><use href="#g" x="693" y="420"/><use href="#f" x="699" y="420"/><use href="#c" x="705" y="420"/></g><g fill="#000"><use href="#c" x="768" y="420"/><use href="#k" x="774" y="420"/><use href="#g" x="778" y="420"/><use href="#e" x="784" y="420"/><use href="#h" x="790" y="420"/></g><g fill="#000"><use href="#c" x="852" y="420"/><use href="#k" x="858" y="420"/><use href="#g" x="862" y="420"/><use href="#e" x="868" y="420"/><use href="#a" x="874" y="420"/></g><g fill="#dc0000"><use href="#a" x="940" y="420"/><use href="#k" x="946" y="420"/><use href="#a" x="950" y="420"/><use href="#a" x="956" y="420"/><use href="#h" x="962" y="420"/></g><g fill="#000"><use href="#c" x="567" y="448"/><use href="#f" x="573" y="448"/><use href="#m" x="579" y="448"/><use href="#a" x="585" y="448"/><use href="#d" x="591" y="448"/><use href="#m" x="597" y="448"/><use href="#b" x="603" y="448"/><use href="#e" x="609" y="448"/></g><g fill="#000"><use href="#c" x="683" y="448"/><use href="#k" x="689" y="448"/><use href="#g" x="693" y="448"/><use href="#d" x="699" y="448"/><use href="#e" x="705" y="448"/></g><g fill="#000"><use href="#c" x="768" y="448"/><use href="#k" x="774" y="448"/><use href="#g" x="778" y="448"/><use href="#e" x="784" y="448"/><use href="#a" x="790" y="448"/></g><g fill="#000"><use href="#c" x="852" y="448"/><use href="#k" x="858" y="448"/><use href="#g" x="862" y="448"/><use href="#c" x="868" y="448"/><use href="#f" x="874" y="448"/></g><g fill="#dc0000"><use href="#a" x="940" y="448"/><use href="#k" x="946" y="448"/><use href="#a" x="950" y="448"/><use href="#b" x="956" y="448"/><use href="#f" x="962" y="448"/></g><g fill="#000"><use href="#c" x="567" y="476"/><use href="#f" x="573" y="476"/><use href="#m" x="579" y="476"/><use href="#a" x="585" y="476"/><use href="#d" x="591" y="476"/><use href="#m" x="597" y="476"/><use href="#b" x="603" y="476"/><use href="#d" x="609" y="476"/></g><g fill="#000"><use href="#c" x="683" y="476"/><use href="#k" x="689" y="476"/><use href="#g" x="693" y="476"/><use href="#c" x="699" y="476"/><use href="#b" x="705" y="476"/></g><g fill="#000"><use href="#c" x="768" y="476"/><use href="#k" x="774" y="476"/><use href="#g" x="778" y="476"/><use href="#c" x="784" y="476"/><use href="#f" x="790" y="476"/></g><g fill="#000"><use href="#c" x="852" y="476"/><use href="#k" x="858" y="476"/><use href="#g" x="862" y="476"/><use href="#b" x="868" y="476"/><use href="#j" x="874" y="476"/></g><g fill="#dc0000"><use href="#a" x="940" y="476"/><use href="#k" x="946" y="476"/><use href="#a" x="950" y="476"/><use href="#a" x="956" y="476"/><use href="#g" x="962" y="476"/></g><g fill="#000"><use href="#c" x="567" y="505"/><use href="#f" x="573" y="505"/><use href="#m" x="579" y="505"/><use href="#a" x="585" y="505"/><use href="#d" x="591" y="505"/><use href="#m" x="597" y="505"/><use href="#b" x="603" y="505"/><use href="#c" x="609" y="505"/></g><g fill="#000"><use href="#c" x="683" y="505"/><use href="#k" x="689" y="505"/><use href="#g" x="693" y="505"/><use href="#d" x="699" y="505"/><use href="#c" x="705" y="505"/></g><g fill="#000"><use href="#c" x="768" y="505"/><use href="#k" x="774" y="505"/><use href="#g" x="778" y="505"/><use href="#b" x="784" y="505"/><use href="#j" x="790" y="505"/></g><g fill="#000"><use href="#c" x="852" y="505"/><use href="#k" x="858" y="505"/><use href="#g" x="862" y="505"/><use href="#d" x="868" y="505"/><use href="#d" x="874" y="505"/></g><g fill="#0000c8"><use href="#l" x="934" y="505"/><use href="#a" x="940" y="505"/><use href="#k" x="946" y="505"/><use href="#a" x="950" y="505"/><use href="#b" x="956" y="505"/><use href="#e" x="962" y="505"/></g><g fill="#000"><use href="#c" x="567" y="533"/><use href="#f" x="573" y="533"/><use href="#m" x="579" y="533"/><use href="#a" x="585" y="533"/><use href="#d" x="591" y="533"/><use href="#m" x="597" y="533"/><use href="#b" x="603" y="533"/><use href="#b" x="609" y="533"/></g><g fill="#000"><use href="#c" x="683" y="533"/><use href="#k" x="689" y="533"/><use href="#g" x="693" y="533"/><use href="#b" x="699" y="533"/><use href="#d" x="705" y="533"/></g><g fill="#000"><use href="#c" x="768" y="533"/><use href="#k" x="774" y="533"/><use href="#g" x="778" y="533"/><use href="#d" x="784" y="533"/><use href="#d" x="790" y="533"/></g><g fill="#000"><use href="#c" x="852" y="533"/><use href="#k" x="858" y="533"/><use href="#g" x="862" y="533"/><use href="#f" x="868" y="533"/><use href="#i" x="874" y="533"/></g><g fill="#0000c8"><use href="#l" x="934" y="533"/><use href="#a" x="940" y="533"/><use href="#k" x="946" y="533"/><use href="#a" x="950" y="533"/><use href="#c" x="956" y="533"/><use href="#f" x="962" y="533"/></g><g fill="#000"><use href="#c" x="567" y="561"/><use href="#f" x="573" y="561"/><use href="#m" x="579" y="561"/><use href="#a" x="585" y="561"/><use href="#d" x="591" y="561"/><use href="#m" x="597" y="561"/><use href="#b" x="603" y="561"/><use href="#a" x="609" y="561"/></g><g fill="#000"><use href="#c" x="683" y="561"/><use href="#k" x="689" y="561"/><use href="#g" x="693" y="561"/><use href="#f" x="699" y="561"/><use href="#b" x="705" y="561"/></g><g fill="#000"><use href="#c" x="768" y="561"/><use href="#k" x="774" y="561"/><use href="#g" x="778" y="561"/><use href="#f" x="784" y="561"/><use href="#i" x="790" y="561"/></g><g fill="#000"><use href="#c" x="852" y="561"/><use href="#k" x="858" y="561"/><use href="#g" x="862" y="561"/><use href="#h" x="868" y="561"/><use href="#i" x="874" y="561"/></g><g fill="#0000c8"><use href="#l" x="934" y="561"/><use href="#a" x="940" y="561"/><use href="#k" x="946" y="561"/><use href="#a" x="950" y="561"/><use href="#c" x="956" y="561"/><use href="#a" x="962" y="561"/></g><g fill="#000"><use href="#c" x="567" y="590"/><use href="#f" x="573" y="590"/><use href="#m" x="579" y="590"/><use href="#a" x="585" y="590"/><use href="#d" x="591" y="590"/><use href="#m" x="597" y="590"/><use href="#a" x="603" y="590"/><use href="#h" x="609" y="590"/></g><g fill="#000"><use href="#c" x="683" y="590"/><use href="#k" x="689" y="590"/><use href="#g" x="693" y="590"/><use href="#h" x="699" y="590"/><use href="#j" x="705" y="590"/></g><g fill="#000"><use href="#c" x="768" y="590"/><use href="#k" x="774" y="590"/><use href="#g" x="778" y="590"/><use href="#h" x="784" y="590"/><use href="#i" x="790" y="590"/></g><g fill="#000"><use href="#c" x="852" y="590"/><use href="#k" x="858" y="590"/><use href="#h" x="862" y="590"/><use href="#a" x="868" y="590"/><use href="#e" x="874" y="590"/></g><g fill="#0000c8"><use href="#l" x="934" y="590"/><use href="#a" x="940" y="590"/><use href="#k" x="946" y="590"/><use href="#a" x="950" y="590"/><use href="#c" x="956" y="590"/><use href="#g" x="962" y="590"/></g><g fill="#000"><use href="#c" x="567" y="618"/><use href="#f" x="573" y="618"/><use href="#m" x="579" y="618"/><use href="#a" x="585" y="618"/><use href="#d" x="591" y="618"/><use href="#m" x="597" y="618"/><use href="#a" x="603" y="618"/><use href="#g" x="609" y="618"/></g><g fill="#000"><use href="#c" x="683" y="618"/><use href="#k" x="689" y="618"/><use href="#h" x="693" y="618"/><use href="#c" x="699" y="618"/><use href="#h" x="705" y="618"/></g><g fill="#000"><use href="#c" x="768" y="618"/><use href="#k" x="774" y="618"/><use href="#h" x="778" y="618"/><use href="#a" x="784" y="618"/><use href="#e" x="790" y="618"/></g><g fill="#000"><use href="#c" x="852" y="618"/><use href="#k" x="858" y="618"/><use href="#g" x="862" y="618"/><use href="#h" x="868" y="618"/><use href="#i" x="874" y="618"/></g><g fill="#dc0000"><use href="#a" x="940" y="618"/><use href="#k" x="946" y="618"/><use href="#a" x="950" y="618"/><use href="#c" x="956" y="618"/><use href="#g" x="962" y="618"/></g><g fill="#000"><use href="#c" x="567" y="646"/><use href="#f" x="573" y="646"/><use href="#m" x="579" y="646"/><use href="#a" x="585" y="646"/><use href="#d" x="591" y="646"/><use href="#m" x="597" y="646"/><use href="#a" x="603" y="646"/><use href="#f" x="609" y="646"/></g><g fill="#000"><use href="#c" x="683" y="646"/><use href="#k" x="689" y="646"/><use href="#g" x="693" y="646"/><use href="#h" x="699" y="646"/><use href="#h" x="705" y="646"/></g><g fill="#000"><use href="#c" x="768" y="646"/><use href="#k" x="774" y="646"/><use href="#g" x="778" y="646"/><use href="#h" x="784" y="646"/><use href="#i" x="790" y="646"/></g><g fill="#000"><use href="#c" x="852" y="646"/><use href="#k" x="858" y="646"/><use href="#g" x="862" y="646"/><use href="#c" x="868" y="646"/><use href="#j" x="874" y="646"/></g><g fill="#dc0000"><use href="#a" x="940" y="646"/><use href="#k" x="946" y="646"/><use href="#a" x="950" y="646"/><use href="#e" x="956" y="646"/><use href="#j" x="962" y="646"/></g></svg>
</body></html>
